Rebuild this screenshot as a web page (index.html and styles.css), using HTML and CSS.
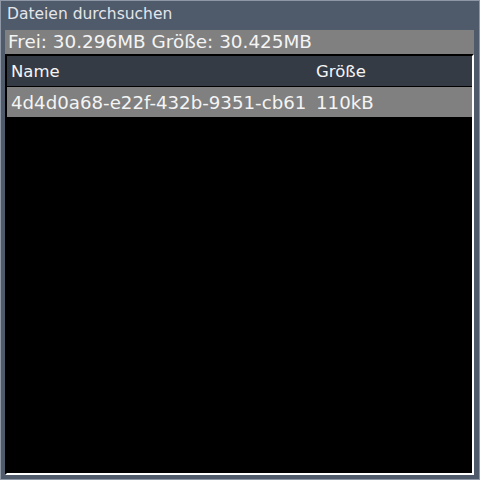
FILE: index.html
```html
<!DOCTYPE html>
<html lang="de">

<head>
    <meta charset="UTF-8">
    <title>Dateien durchsuchen</title>
    <link rel="stylesheet" href="styles.css">
</head>

<body>
    <div class="window">
        <div class="window-title">Dateien durchsuchen</div>

        <!-- Speicher-Info -->
        <div class="status-bar">Frei: 30.296MB Größe: 30.425MB</div>

        <!-- Dateiliste -->
        <div class="file-list">
            <div class="list-header">
                <span class="col-name">Name</span>
                <span class="col-size">Größe</span>
            </div>
            <div class="list-row selected">
                <span class="col-name">4d4d0a68-e22f-432b-9351-cb61</span>
                <span class="col-size">110kB</span>
            </div>
        </div>
    </div>
</body>

</html>
```

FILE: styles.css
```css
body {
    margin: 0;
    padding: 0;
    background-color: #4f5a6b;
    font-family: "DejaVu Sans", Verdana, sans-serif;
}

.window {
    width: 480px;
    height: 480px;
    box-sizing: border-box;
    border: 1px solid #8e97a5;
    padding: 0 5px 4px 4px;
    display: flex;
    flex-direction: column;
}

.window-title {
    height: 29px;
    padding-left: 2px;
    font-size: 15.5px;
    line-height: 27px;
    color: #e4e6ea;
}

.status-bar {
    height: 24px;
    background-color: #808080;
    color: #f4f4f4;
    font-size: 18.4px;
    line-height: 24px;
    padding-left: 3px;
}

.file-list {
    flex: 1;
    background-color: #000;
    border-top: 2px solid #000;
    border-left: 2px solid #000;
    border-right: 2px solid #fff;
    border-bottom: 2px solid #fff;
}

.list-header,
.list-row {
    display: grid;
    grid-template-columns: 305px 1fr;
    height: 30px;
    align-items: center;
    color: #f4f4f4;
}

.list-header {
    background-color: #343b45;
    font-size: 16.5px;
    border-bottom: 1px solid #000;
}

.list-row {
    font-size: 18.2px;
}

.list-row.selected {
    background-color: #808080;
}

.col-name {
    padding-left: 4px;
}

.col-size {
    padding-left: 4px;
}
```
